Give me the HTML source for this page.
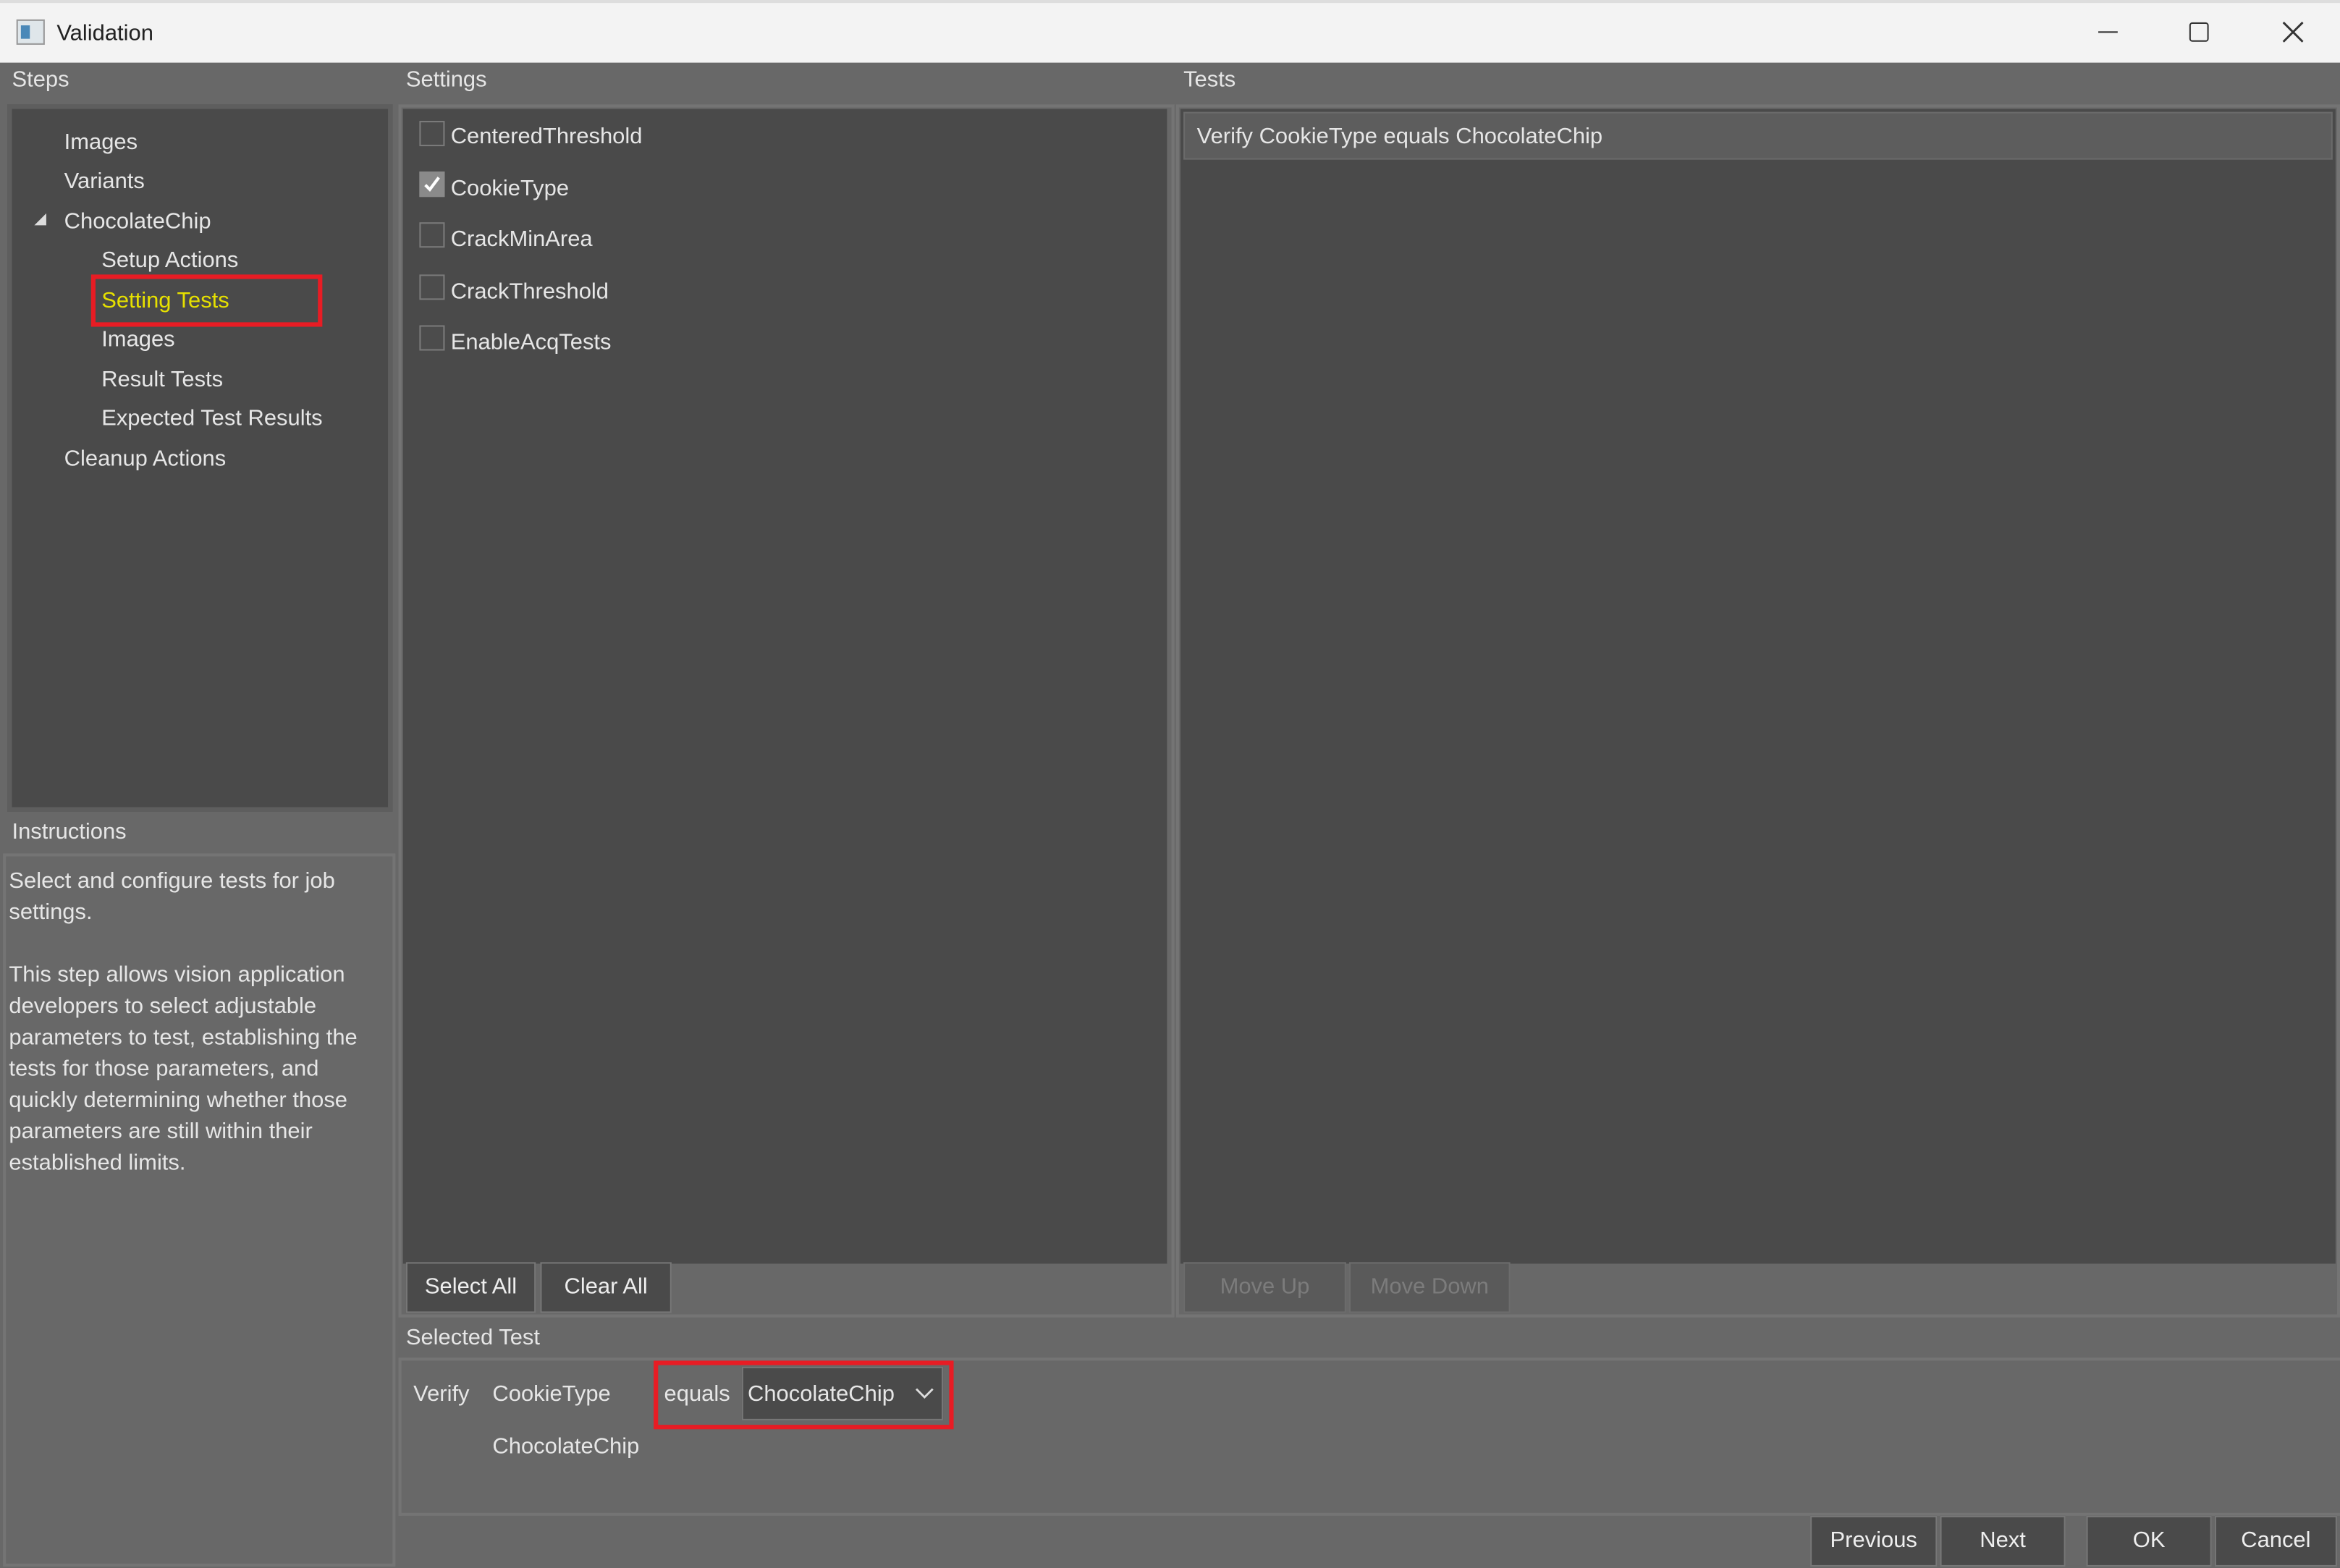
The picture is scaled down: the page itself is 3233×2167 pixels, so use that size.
<!DOCTYPE html>
<html><head><meta charset="utf-8"><style>
*{box-sizing:border-box;margin:0;padding:0}
html,body{width:3233px;height:2166px;overflow:hidden;background:#686868}
#s{position:absolute;left:0;top:0;width:1568px;height:1051px;transform:scale(2.0619);transform-origin:0 0;background:#686868;font-family:"Liberation Sans",sans-serif;font-size:15px;color:#e6e6e6}
.a{position:absolute;white-space:nowrap}
.t{line-height:18px;margin-top:1px}
.dark{background:#4a4a4a}
.btn{position:absolute;background:#4a4a4a;border:1px solid #777;text-align:center;line-height:32px;color:#eee}
.dis{background:#5a5a5a;color:#7c7c7c;border-color:#6c6c6c}
.cb{position:absolute;left:281px;width:17px;height:17px;border:1px solid #7a7a7a;background:#4c4c4c}
.red{position:absolute;border:3px solid #e81c24}
</style></head><body><div id="s">
<div class="a" style="left:0;top:0;width:1568px;height:42px;background:#f3f3f3;border-top:2px solid #ddd"></div>
<div class="a" style="left:11px;top:13px;width:19px;height:17px;background:#dfe6ea;border:1px solid #999"><div style="position:absolute;left:2px;top:3px;width:6px;height:9px;background:#4a88b8"></div></div>
<div class="a t" style="left:38px;top:13px;color:#222">Validation</div>
<div class="a" style="left:1406px;top:21px;width:13px;height:1px;background:#333"></div>
<div class="a" style="left:1467px;top:15px;width:13px;height:13px;border:1.5px solid #333;border-radius:2px"></div>
<svg class="a" style="left:1529px;top:14px" width="15" height="15"><path d="M1 1L14 14M14 1L1 14" stroke="#333" stroke-width="1.4"/></svg>

<div class="a t" style="left:8px;top:44px">Steps</div>
<div class="a t" style="left:272px;top:44px">Settings</div>
<div class="a t" style="left:793px;top:44px">Tests</div>

<div class="a dark" style="left:5px;top:70px;width:258px;height:474px;border:3px solid #5e5e5e"></div>
<div class="a t" style="left:43px;top:86px">Images</div>
<div class="a t" style="left:43px;top:112px">Variants</div>
<div class="a" style="left:23px;top:143px;width:0;height:0;border-left:8px solid transparent;border-bottom:8px solid #ddd"></div>
<div class="a t" style="left:43px;top:139px">ChocolateChip</div>
<div class="a t" style="left:68px;top:165px">Setup Actions</div>
<div class="a t" style="left:68px;top:192px;color:#e6e000">Setting Tests</div>
<div class="red" style="left:61px;top:184px;width:155px;height:35px"></div>
<div class="a t" style="left:68px;top:218px">Images</div>
<div class="a t" style="left:68px;top:245px">Result Tests</div>
<div class="a t" style="left:68px;top:271px">Expected Test Results</div>
<div class="a t" style="left:43px;top:298px">Cleanup Actions</div>

<div class="a t" style="left:8px;top:548px">Instructions</div>
<div class="a" style="left:2px;top:572px;width:263px;height:478px;border:2px solid #747474"></div>
<div class="a" style="left:6px;top:580px;width:255px;white-space:normal;line-height:21px">Select and configure tests for job settings.<br><br>This step allows vision application developers to select adjustable parameters to test, establishing the tests for those parameters, and quickly determining whether those parameters are still within their established limits.</div>

<div class="a" style="left:267px;top:70px;width:520px;height:813px;border:2px solid #747474"></div>
<div class="a dark" style="left:270px;top:73px;width:512px;height:774px"></div>
<div class="cb" style="top:81px"></div><div class="a t" style="left:302px;top:82px">CenteredThreshold</div>
<div class="cb" style="top:115px;background:#8a8a8a;border-color:#8a8a8a"><svg width="15" height="15" style="position:absolute;left:0;top:0"><path d="M3 8L6 11L12 3" stroke="#fff" stroke-width="2" fill="none"/></svg></div><div class="a t" style="left:302px;top:117px">CookieType</div>
<div class="cb" style="top:149px"></div><div class="a t" style="left:302px;top:151px">CrackMinArea</div>
<div class="cb" style="top:184px"></div><div class="a t" style="left:302px;top:186px">CrackThreshold</div>
<div class="cb" style="top:218px"></div><div class="a t" style="left:302px;top:220px">EnableAcqTests</div>
<div class="btn" style="left:272px;top:846px;width:87px;height:34px">Select All</div>
<div class="btn" style="left:362px;top:846px;width:88px;height:34px">Clear All</div>

<div class="a" style="left:788px;top:70px;width:780px;height:813px;border:2px solid #747474"></div>
<div class="a dark" style="left:791px;top:73px;width:774px;height:774px"></div>
<div class="a" style="left:793px;top:75px;width:770px;height:32px;background:#5d5d5d;border:1px solid #6a6a6a"></div>
<div class="a t" style="left:802px;top:82px">Verify CookieType equals ChocolateChip</div>
<div class="btn dis" style="left:793px;top:846px;width:109px;height:34px">Move Up</div>
<div class="btn dis" style="left:904px;top:846px;width:108px;height:34px">Move Down</div>

<div class="a t" style="left:272px;top:887px">Selected Test</div>
<div class="a" style="left:267px;top:910px;width:1301px;height:106px;border:2px solid #747474;border-right:none"></div>
<div class="a t" style="left:277px;top:925px">Verify</div>
<div class="a t" style="left:330px;top:925px">CookieType</div>
<div class="a t" style="left:445px;top:925px">equals</div>
<div class="a dark" style="left:497px;top:916px;width:135px;height:36px;border:1px solid #777"></div>
<div class="a t" style="left:501px;top:925px">ChocolateChip</div>
<svg class="a" style="left:613px;top:929px" width="13" height="10"><path d="M1 2L6.5 7.5L12 2" stroke="#ddd" stroke-width="1.4" fill="none"/></svg>
<div class="red" style="left:438px;top:912px;width:201px;height:46px"></div>
<div class="a t" style="left:330px;top:960px">ChocolateChip</div>

<div class="btn" style="left:1213px;top:1016px;width:85px;height:34px">Previous</div>
<div class="btn" style="left:1300px;top:1016px;width:84px;height:34px">Next</div>
<div class="btn" style="left:1398px;top:1016px;width:84px;height:34px">OK</div>
<div class="btn" style="left:1484px;top:1016px;width:82px;height:34px">Cancel</div>
</div></body></html>
